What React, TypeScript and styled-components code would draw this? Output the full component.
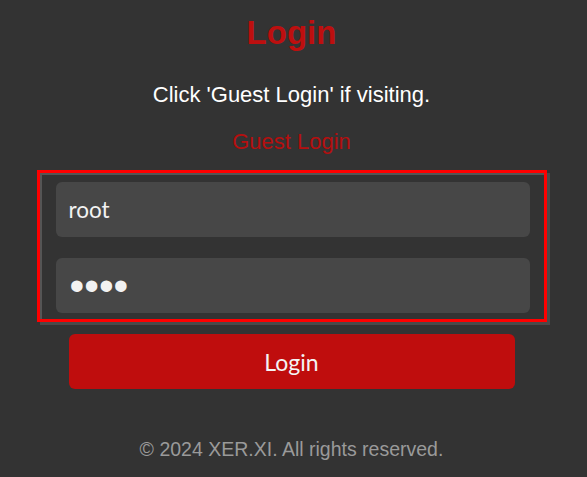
import React from "react";
import styled, { createGlobalStyle } from "styled-components";

const GlobalStyle = createGlobalStyle`
  html, body {
    margin: 0;
    padding: 0;
    background: #333333;
  }
  body {
    font-family: "Liberation Sans", Arial, sans-serif;
  }
`;

const Page = styled.main`
  display: flex;
  flex-direction: column;
  align-items: center;
  min-height: 477px;
  box-sizing: border-box;
  padding: 14px 4px 0 0;
`;

const Title = styled.h1`
  margin: 0;
  font-size: 33px;
  line-height: 38px;
  font-weight: 700;
  color: #bd0f0f;
`;

const Subtitle = styled.p`
  margin: 30px 0 0;
  font-size: 22px;
  line-height: 25px;
  color: #ffffff;
`;

const GuestLink = styled.a`
  margin-top: 22px;
  font-size: 22px;
  line-height: 25px;
  color: #b50f0f;
  text-decoration: none;
  cursor: pointer;
`;

const Form = styled.form`
  margin-top: 16px;
  width: 510px;
  box-sizing: border-box;
  display: flex;
  flex-direction: column;
  align-items: center;
  gap: 12px;
`;

const FieldBox = styled.div`
  width: 510px;
  box-sizing: border-box;
  border: 3px solid #ff0000;
  box-shadow: inset 2px 2px 0 #555555, 3px 3px 0 #4a4a4a;
  padding: 9px 14px 6px 16px;
  display: flex;
  flex-direction: column;
  gap: 21px;
`;

const Input = styled.input`
  height: 55px;
  width: 100%;
  box-sizing: border-box;
  border: none;
  border-radius: 6px;
  background: #474747;
  color: #f2f2f2;
  font-family: Lato, "Noto Sans", sans-serif;
  font-size: 22.5px;
  padding: 0 13px;
  outline: none;
`;

const PasswordInput = styled(Input)`
  font-family: "Liberation Sans", Arial, sans-serif;
  font-size: 42px;
  padding: 0 14px;
`;

const SubmitButton = styled.button`
  width: 446px;
  height: 55px;
  border: none;
  border-radius: 6px;
  background: #bf0d0d;
  color: #f4f4f4;
  font-family: Lato, "Noto Sans", sans-serif;
  font-size: 23px;
  cursor: pointer;
`;

const Footer = styled.footer`
  margin-top: 49px;
  font-size: 19.5px;
  line-height: 22px;
  color: #9a9a9a;
`;

export default function App() {
  return (
    <>
      <GlobalStyle />
      <Page>
        <Title>Login</Title>
        <Subtitle>Click 'Guest Login' if visiting.</Subtitle>
        <GuestLink>Guest Login</GuestLink>
        <Form onSubmit={(e) => e.preventDefault()}>
          <FieldBox>
            <Input type="text" defaultValue="root" />
            <PasswordInput type="password" defaultValue="root" />
          </FieldBox>
          <SubmitButton type="submit">Login</SubmitButton>
        </Form>
        <Footer>© 2024 XER.XI. All rights reserved.</Footer>
      </Page>
    </>
  );
}
